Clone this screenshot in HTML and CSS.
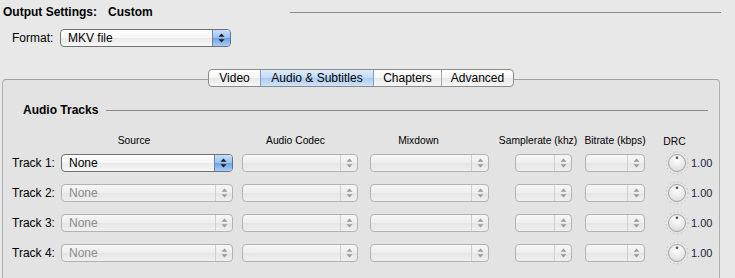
FILE: index.html
```html
<!DOCTYPE html>
<html lang="en">
<head>
    <meta charset="UTF-8">
    <title>Output Settings</title>
    <link rel="stylesheet" href="styles.css">
</head>
<body>
    <div class="header">
        <span class="title">Output Settings:</span>
        <span class="title preset">Custom</span>
        <div class="rule top-rule"></div>
    </div>

    <div class="format-row">
        <span class="format-label">Format:</span>
        <div class="popup active format-popup">
            <span class="popup-text">MKV file</span>
            <span class="popup-arrows blue">
                <svg width="7" height="10" viewBox="0 0 7 10"><path d="M3.5 0.5 L6.5 3.8 L0.5 3.8 Z M3.5 9.5 L6.5 6.2 L0.5 6.2 Z" fill="#1a1a1a"/></svg>
            </span>
        </div>
    </div>

    <div class="panel">
        <div class="tabs">
            <div class="tab t-video">Video</div>
            <div class="tab t-audio selected">Audio &amp; Subtitles</div>
            <div class="tab t-chapters">Chapters</div>
            <div class="tab t-advanced">Advanced</div>
        </div>

        <div class="section-title">
            <span class="title">Audio Tracks</span>
            <div class="rule section-rule"></div>
        </div>

        <div class="tracks">
            <div class="row head-row">
                <div class="lbl"></div>
                <div class="col c-src h-src">Source</div>
                <div class="col c-codec h-codec">Audio Codec</div>
                <div class="col c-mix h-mix">Mixdown</div>
                <div class="col c-rate h-rate">Samplerate (khz)</div>
                <div class="col c-bit">Bitrate (kbps)</div>
                <div class="col c-drc h-drc">DRC</div>
            </div>
            <div id="trackRows"></div>
        </div>
    </div>

    <script>
        // build the four track rows
        const arrows = (color) => `<svg width="7" height="10" viewBox="0 0 7 10"><path d="M3.5 0.5 L6.5 3.8 L0.5 3.8 Z M3.5 9.5 L6.5 6.2 L0.5 6.2 Z" fill="${color}"/></svg>`;
        const empty = (cls) => `<div class="popup disabled ${cls}"><span class="popup-text"></span><span class="popup-arrows">${arrows('#9a9a9a')}</span></div>`;
        const knob = (i) => `
            <svg width="24" height="24" viewBox="0 0 24 24">
                <defs>
                    <radialGradient id="kg${i}" cx="50%" cy="30%" r="70%">
                        <stop offset="0%" stop-color="#ffffff"/>
                        <stop offset="100%" stop-color="#dcdcdc"/>
                    </radialGradient>
                </defs>
                <circle cx="12" cy="12" r="11" fill="none" stroke="#9a9a9a" stroke-width="0.8" stroke-dasharray="0.8 3.2"/>
                <circle cx="12" cy="12" r="8.5" fill="url(#kg${i})" stroke="#9c9c9c" stroke-width="0.9"/>
                <circle cx="12" cy="6.8" r="1.4" fill="#5a5a5a"/>
            </svg>`;

        let html = '';
        for (let i = 1; i <= 4; i++) {
            const first = i === 1;
            const src = first
                ? `<div class="popup active c-src"><span class="popup-text">None</span><span class="popup-arrows blue">${arrows('#1a1a1a')}</span></div>`
                : `<div class="popup disabled c-src"><span class="popup-text">None</span><span class="popup-arrows">${arrows('#9a9a9a')}</span></div>`;
            html += `<div class="row track-row">
                <div class="lbl">Track ${i}:</div>
                ${src}
                ${empty('c-codec')}
                ${empty('c-mix')}
                ${empty('c-rate')}
                ${empty('c-bit')}
                <div class="c-drc knob">${knob(i)}</div>
                <div class="drc-value">1.00</div>
            </div>`;
        }
        document.getElementById('trackRows').innerHTML = html;
    </script>
</body>
</html>
```

FILE: styles.css
```css
html, body {
    margin: 0;
    padding: 0;
    overflow: hidden;
}
body {
    font-family: "Liberation Sans", Arial, sans-serif;
    font-size: 12px;
    color: #000;
    background: #e8e8e8;
    width: 735px;
    height: 278px;
}
.title {
    font-weight: bold;
    line-height: 14px;
}
.rule {
    border-top: 1px solid #8a8a8a;
    height: 0;
}

/* top header */
.header {
    display: flex;
    align-items: center;
    height: 24px;
    padding-left: 3px;
}
.preset {
    margin-left: 11px;
}
.top-rule {
    width: 431px;
    margin-left: auto;
    margin-right: 14px;
}

.format-row {
    display: flex;
    align-items: center;
    height: 20px;
    margin-top: 4px;
    padding-left: 12px;
}
.format-label {
    width: 48px;
}
.format-popup {
    width: 171px;
    height: 20px;
}

/* popups */
.popup {
    display: flex;
    align-items: stretch;
    box-sizing: border-box;
    height: 18px;
    border: 1px solid #b3b3b3;
    border-radius: 4px;
    overflow: hidden;
    background: linear-gradient(#f6f6f6, #eeeeee 50%, #e6e6e6 52%, #efefef);
}
.popup.active {
    border-color: #707070;
    background: linear-gradient(#ffffff, #f6f6f6 50%, #eaeaea 52%, #f7f7f7);
}
.popup-text {
    flex: 1;
    padding-left: 7px;
    display: flex;
    align-items: center;
    white-space: nowrap;
}
.popup.disabled .popup-text {
    color: #8c8c8c;
}
.popup-arrows {
    width: 16px;
    display: flex;
    align-items: center;
    justify-content: center;
    border-left: 1px solid #cfcfcf;
}
.popup-arrows.blue {
    width: 17px;
    border-left: 1px solid #5b86c0;
    background: linear-gradient(#c9def7, #98c0ef 50%, #6fa4e6 52%, #a9cdf6);
}

/* tabbed panel */
.panel {
    box-sizing: border-box;
    height: 199px;
    margin: 31px 15px 0 2px;
    border: 1px solid #b0b0b0;
    border-top-color: #a0a0a0;
    border-bottom: 0;
    border-radius: 4px 4px 0 0;
    background: #e3e3e3;
}
.tabs {
    display: flex;
    width: fit-content;
    margin: -11px auto 0;
    height: 18px;
    box-sizing: border-box;
    border: 1px solid #8b8b8b;
    border-radius: 4px;
    overflow: hidden;
    background: linear-gradient(#ffffff, #f5f5f5 50%, #e9e9e9 52%, #f6f6f6);
}
.tab {
    box-sizing: border-box;
    height: 16px;
    line-height: 16px;
    text-align: center;
    border-left: 1px solid #a6a6a6;
}
.t-video { width: 51px; border-left: 0; }
.t-audio { width: 113px; }
.t-chapters { width: 68px; }
.t-advanced { width: 72px; }
.tab.selected {
    background: linear-gradient(#deebfb, #c4dbf6 50%, #abcdf2 52%, #cfe3fa);
    border-left-color: #7e9dc4;
    border-right: 1px solid #7e9dc4;
    width: 114px;
}
.tab.selected + .tab {
    border-left: 0;
    width: 67px;
}

.section-title {
    display: flex;
    align-items: center;
    margin-top: 16px;
    padding-left: 20px;
}
.section-rule {
    flex: 1;
    margin-left: 8px;
    margin-right: 11px;
}

/* tracks grid */
.tracks {
    padding-left: 9px;
}
.row {
    display: flex;
    align-items: center;
}
.head-row {
    margin-top: 18px;
    height: 12px;
    font-size: 10.3px;
    line-height: 12px;
}
.head-row .col {
    display: flex;
    justify-content: center;
    white-space: nowrap;
    box-sizing: border-box;
}
.track-row {
    height: 18px;
    margin-top: 12px;
}
#trackRows .track-row:first-child {
    margin-top: 7px;
}
.lbl {
    width: 49px;
    white-space: nowrap;
}
.c-src { width: 172px; }
.c-codec { width: 116px; margin-left: 9px; }
.c-mix { width: 119px; margin-left: 12px; }
.c-rate { width: 57px; margin-left: 26px; }
.c-bit { width: 60px; margin-left: 13px; }
.c-drc { width: 24px; margin-left: 20px; }

.h-src { padding-right: 26px; }
.h-codec { padding-right: 9px; }
.h-mix { padding-right: 22px; }
.h-rate { padding-right: 11px; }
.h-drc { padding-right: 5px; margin-top: 2px; }

.knob {
    display: flex;
    align-items: center;
    justify-content: center;
    height: 24px;
}
.drc-value {
    margin-left: 2px;
    font-size: 11px;
    color: #1d1d3a;
}
```
